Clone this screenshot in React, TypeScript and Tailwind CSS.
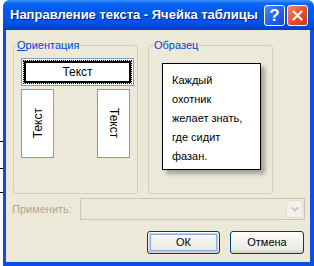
import React from 'react';

const font = { fontFamily: '"Liberation Sans", Arial, sans-serif' };

function XpButton({ label, isDefault, width }: { label: string; isDefault?: boolean; width: string }) {
  return (
    <div className={`${width} h-[23px] rounded-[3px] border border-[#003C74] bg-[linear-gradient(to_bottom,#FFFFFF_0%,#F4F3EE_40%,#ECEBE6_80%,#D6D0C5_100%)] p-[1px]`}>
      <div
        className={`h-full w-full rounded-[2px] flex items-center justify-center text-[11px] text-black ${
          isDefault ? 'shadow-[inset_0_0_0_1px_#B8D2F8,inset_0_0_0_2px_#89ADE4]' : ''
        }`}
      >
        {label}
      </div>
    </div>
  );
}

export default function App() {
  return (
    <div className="w-[314px] h-[266px] bg-white flex overflow-hidden" style={font}>
      {/* stray lines of the page behind the dialog */}
      <div className="w-[3px] shrink-0 flex flex-col">
        <div className="h-[141px]" />
        <div className="h-px bg-black" />
        <div className="h-[26px]" />
        <div className="h-px bg-black" />
        <div className="h-[23px]" />
        <div className="h-px bg-black" />
      </div>

      {/* window */}
      <div className="w-[311px] h-[266px] flex flex-col rounded-t-[7px] overflow-hidden bg-[#0A4FDF]">
        {/* title bar */}
        <div className="h-[30px] shrink-0 flex items-center pl-[7px] pr-[6px] bg-[linear-gradient(to_bottom,#3D95FF_0%,#0A66F5_12%,#0058EE_35%,#0055E8_70%,#0148D4_90%,#003DC4_100%)]">
          <div className="flex-1 text-white font-bold text-[13px] [text-shadow:1px_1px_0_#0A1883] whitespace-nowrap">
            Направление текста - Ячейка таблицы
          </div>
          <div className="flex gap-[2px]">
            <div className="w-[21px] h-[21px] rounded-[3px] border border-white bg-[linear-gradient(135deg,#4E8BFF_0%,#2463F0_50%,#1448D8_100%)] flex items-center justify-center text-white font-bold text-[17px] leading-none">
              ?
            </div>
            <div className="w-[21px] h-[21px] rounded-[3px] border border-white bg-[linear-gradient(135deg,#F08A64_0%,#E0552C_50%,#C4391A_100%)] flex items-center justify-center">
              <svg width="11" height="11" viewBox="0 0 11 11">
                <path d="M1.5 1.5 L9.5 9.5 M9.5 1.5 L1.5 9.5" stroke="white" strokeWidth="2" strokeLinecap="square" />
              </svg>
            </div>
          </div>
        </div>

        {/* client area */}
        <div className="flex-1 flex pl-[3px] pr-[4px] pb-[4px]">
          <div className="flex-1 bg-[#ECE9D8] flex flex-col pt-[9px]">
            <div className="flex gap-[10px] pl-[7px]">
              <fieldset className="w-[125px] h-[155px] border border-[#D0D0BF] rounded-[3px] pl-[7px]">
                <legend className="-ml-[5px] px-[1px] text-[11px] leading-[13px] text-[#0046D5]">
                  <span className="underline">О</span>риентация
                </legend>
                <div className="mt-[6px] w-[113px] h-[28px] border border-[#7F9DB9] bg-white p-[1px]">
                  <div className="h-full border border-dotted border-black">
                    <div className="h-full border-2 border-black bg-white flex items-center justify-center text-[12px] text-black">
                      Текст
                    </div>
                  </div>
                </div>
                <div className="mt-[3px] w-[109px] flex justify-between">
                  <div className="w-[33px] h-[69px] border border-[#7F9DB9] bg-white flex items-center justify-center">
                    <span className="[writing-mode:vertical-rl] rotate-180 text-[12px] text-black">Текст</span>
                  </div>
                  <div className="w-[33px] h-[69px] border border-[#7F9DB9] bg-white flex items-center justify-center">
                    <span className="[writing-mode:vertical-rl] text-[12px] text-black">Текст</span>
                  </div>
                </div>
              </fieldset>

              <fieldset className="w-[125px] h-[155px] border border-[#D0D0BF] rounded-[3px] pl-[13px]">
                <legend className="-ml-[9px] px-[1px] text-[11px] leading-[13px] text-[#0046D5]">Образец</legend>
                <div className="mt-[11px] w-[99px] h-[107px] border border-black bg-white pl-[9px] pt-[7px] text-[11px] leading-[19px] text-black shadow-[4px_4px_4px_rgba(0,0,0,0.3)]">
                  Каждый
                  <br />
                  охотник
                  <br />
                  желает знать,
                  <br />
                  где сидит
                  <br />
                  фазан.
                </div>
              </fieldset>
            </div>

            {/* apply row */}
            <div className="mt-[4px] flex items-center pl-[6px]">
              <div className="w-[68px] text-[11px] text-[#ACA899]">Применить:</div>
              <div className="w-[225px] h-[22px] border border-[#C9C7BA] bg-[#ECE9D8] flex justify-end p-[1px]">
                <div className="w-[17px] h-full rounded-[2px] border border-[#E2E0D4] bg-[#F3F1EA] flex items-center justify-center">
                  <svg width="8" height="6" viewBox="0 0 8 6">
                    <path d="M1 1.5 L4 4.5 L7 1.5" stroke="#C9C7BA" strokeWidth="2" fill="none" />
                  </svg>
                </div>
              </div>
            </div>

            {/* buttons */}
            <div className="mt-[11px] flex justify-end gap-[10px] pr-[6px]">
              <XpButton label="ОК" isDefault width="w-[73px]" />
              <XpButton label="Отмена" width="w-[74px]" />
            </div>
          </div>
        </div>
      </div>
    </div>
  );
}
